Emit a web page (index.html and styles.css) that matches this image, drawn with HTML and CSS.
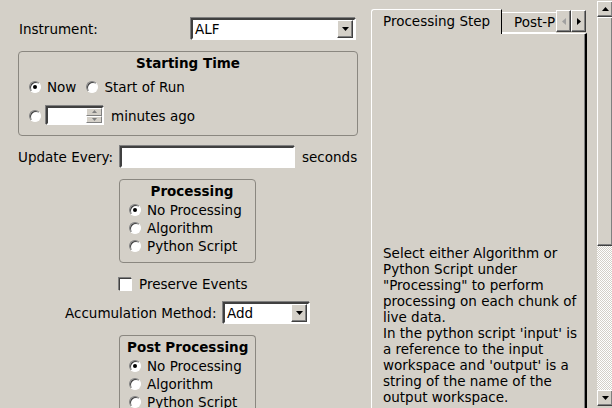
FILE: index.html
```html
<!DOCTYPE html>
<html>
<head>
<meta charset="utf-8">
<link rel="stylesheet" href="styles.css">
</head>
<body>
<div class="app">
  <div class="left">
    <div class="row instrument-row">
      <span class="lbl lbl-inst">Instrument:</span>
      <div class="combo combo-inst"><span class="combo-text">ALF</span><span class="combo-btn"><svg width="7" height="4" viewBox="0 0 7 4"><path d="M0 0H7L3.5 4Z" fill="#000"/></svg></span></div>
    </div>

    <div class="group group-start">
      <div class="group-title">Starting Time</div>
      <div class="row radios-row">
        <span class="radio checked"></span><span class="rtext">Now</span>
        <span class="radio r2"></span><span class="rtext">Start of Run</span>
      </div>
      <div class="row minutes-row">
        <span class="radio"></span>
        <div class="spin"><span class="spin-field"></span><span class="spin-btns"><span class="sbtn"><svg width="5" height="3" viewBox="0 0 5 3"><path d="M2.5 0L5 3H0Z" fill="#808080"/></svg></span><span class="sbtn"><svg width="5" height="3" viewBox="0 0 5 3"><path d="M0 0H5L2.5 3Z" fill="#808080"/></svg></span></span></div>
        <span class="rtext">minutes ago</span>
      </div>
    </div>

    <div class="row update-row">
      <span class="lbl lbl-update">Update Every:</span>
      <span class="field field-update"></span>
      <span class="lbl">seconds</span>
    </div>

    <div class="group group-small group-proc">
      <div class="group-title">Processing</div>
      <div class="opt"><span class="radio checked"></span><span class="rtext">No Processing</span></div>
      <div class="opt"><span class="radio"></span><span class="rtext">Algorithm</span></div>
      <div class="opt"><span class="radio"></span><span class="rtext">Python Script</span></div>
    </div>

    <div class="row check-row">
      <span class="checkbox"></span><span class="rtext">Preserve Events</span>
    </div>

    <div class="row accum-row">
      <span class="lbl lbl-accum">Accumulation Method:</span>
      <div class="combo combo-accum"><span class="combo-text">Add</span><span class="combo-btn"><svg width="7" height="4" viewBox="0 0 7 4"><path d="M0 0H7L3.5 4Z" fill="#000"/></svg></span></div>
    </div>

    <div class="group group-small group-post">
      <div class="group-title title-left">Post Processing</div>
      <div class="opt"><span class="radio checked"></span><span class="rtext">No Processing</span></div>
      <div class="opt"><span class="radio"></span><span class="rtext">Algorithm</span></div>
      <div class="opt"><span class="radio"></span><span class="rtext">Python Script</span></div>
    </div>
  </div>

  <div class="tabs">
    <div class="tabbar">
      <div class="tab active">Processing Step</div>
      <div class="tab inactive"><span>Post-P</span></div>
      <div class="tscroll">
        <span class="tsbtn"><svg width="4" height="7" viewBox="0 0 4 7"><path d="M4 0V7L0 3.5Z" fill="#a0a0a0"/></svg></span>
        <span class="tsbtn"><svg width="4" height="7" viewBox="0 0 4 7"><path d="M0 0V7L4 3.5Z" fill="#000"/></svg></span>
      </div>
    </div>
    <div class="pane">
      <p class="help">Select either Algorithm or Python Script under "Processing" to perform processing on each chunk of live data.<br>In the python script 'input' is a reference to the input workspace and 'output' is a string of the name of the output workspace.</p>
    </div>
  </div>

  <div class="vscroll">
    <span class="vbtn"><svg width="7" height="4" viewBox="0 0 7 4"><path d="M3.5 0L7 4H0Z" fill="#000"/></svg></span>
    <span class="vhandle"></span>
    <span class="vtrough"></span>
    <span class="vbtn"><svg width="7" height="4" viewBox="0 0 7 4"><path d="M0 0H7L3.5 4Z" fill="#000"/></svg></span>
  </div>
</div>
</body>
</html>
```

FILE: styles.css
```css
* { box-sizing: border-box; }
html, body { margin: 0; padding: 0; }
body {
  width: 612px;
  height: 408px;
  overflow: hidden;
  background: #d4d0c8;
  font-family: "DejaVu Sans", sans-serif;
  font-size: 13.5px;
  color: #000;
}
.app {
  display: flex;
  height: 408px;
  overflow: hidden;
}
.left {
  width: 370px;
  height: 408px;
  overflow: hidden;
  flex: none;
  display: flex;
  flex-direction: column;
  padding-top: 18px;
}
.left > * { flex: none; }
.row {
  display: flex;
  align-items: center;
}
.lbl, .rtext { white-space: nowrap; line-height: 16px; }

.instrument-row {
  height: 22px;
  padding-left: 19px;
}
.lbl-inst { width: 172px; }
.combo {
  display: flex;
  background: #fff;
  border: 2px solid;
  border-color: #404040 #fff #fff #404040;
  box-shadow: -1px -1px 0 #808080;
  height: 22px;
  padding: 0 1px 0 0;
  align-items: center;
}
.combo-inst { width: 165px; }
.combo-text { flex: 1; padding-left: 2px; line-height: 16px; }
.combo-btn {
  width: 16px;
  height: 18px;
  background: #d4d0c8;
  border: 1px solid;
  border-color: #fff #404040 #404040 #fff;
  box-shadow: inset -1px -1px 0 #808080;
  display: flex;
  align-items: center;
  justify-content: center;
}

.group {
  border: 1px solid #8a8780;
  border-radius: 4px;
}
.group-title {
  font-weight: bold;
  text-align: center;
  line-height: 16px;
}
.group-start {
  margin: 11px 0 0 18px;
  width: 340px;
  height: 85px;
  padding: 3px 0 0 10px;
}
.group-start .group-title { margin-right: 10px; }
.radios-row { margin-top: 8px; height: 16px; }
.radio {
  width: 12px;
  height: 12px;
  flex: none;
  border-radius: 50%;
  border: 1px solid;
  border-color: #808080 #fff #fff #808080;
  box-shadow: inset 1px 1px 0 #404040;
  background: #fff;
  position: relative;
  margin-right: 6px;
}
.radio.checked::after {
  content: "";
  position: absolute;
  left: 3px;
  top: 3px;
  width: 4px;
  height: 4px;
  border-radius: 50%;
  background: #000;
}
.radio.r2 { margin-left: 10px; }
.minutes-row { margin-top: 11px; height: 19px; }
.minutes-row .radio { margin-right: 5px; }
.spin {
  width: 58px;
  height: 19px;
  display: flex;
  background: #fff;
  border: 2px solid;
  border-color: #404040 #fff #fff #404040;
  box-shadow: -1px -1px 0 #808080;
  margin-right: 7px;
}
.spin-field { flex: 1; }
.spin-btns {
  width: 16px;
  display: flex;
  flex-direction: column;
}
.sbtn {
  flex: 1;
  background: #d4d0c8;
  border: 1px solid;
  border-color: #fff #808080 #808080 #fff;
  display: flex;
  align-items: center;
  justify-content: center;
}

.update-row {
  margin-top: 10px;
  padding-left: 18px;
  height: 22px;
}
.lbl-update { width: 102px; }
.field {
  background: #fff;
  border: 2px solid;
  border-color: #404040 #fff #fff #404040;
  box-shadow: -1px -1px 0 #808080;
  height: 22px;
}
.field-update { width: 175px; margin: 0 7px 0 0; }

.group-small {
  width: 137px;
  margin-left: 119px;
  padding: 3px 0 0 9px;
}
.group-proc { margin-top: 11px; height: 84px; }
.opt {
  display: flex;
  align-items: center;
  height: 18px;
}
.group-small .group-title + .opt { margin-top: 2px; }
.title-left { text-align: left; padding-left: 0; margin-left: -2px; }
.group-post { margin-top: 11px; height: 100px; border-bottom: none; }

.check-row {
  margin-top: 15px;
  padding-left: 119px;
  height: 12px;
}
.checkbox {
  width: 13px;
  height: 13px;
  background: #fff;
  border: 1px solid;
  border-color: #404040 #fff #fff #404040;
  box-shadow: -1px -1px 0 #808080;
  margin-right: 7px;
}
.accum-row {
  margin-top: 12px;
  padding-left: 65px;
  height: 22px;
}
.lbl-accum { width: 158px; }
.combo-accum { width: 87px; }

.tabs {
  width: 217px;
  flex: none;
  display: flex;
  flex-direction: column;
  padding-top: 9px;
  margin-left: 1px;
}
.tabbar {
  display: flex;
  height: 24px;
  align-items: flex-end;
  position: relative;
  z-index: 1;
}
.tab {
  white-space: nowrap;
  line-height: 16px;
}
.tab.active {
  width: 131px;
  border-top: 1px solid #fff;
  border-left: 1px solid #fff;
  border-right: 1px solid #000;
  border-top-left-radius: 3px;
  padding: 3px 0 0 11px;
  background: #d4d0c8;
  margin-bottom: -1px;
  height: 25px;
}
.tab.inactive {
  width: 54px;
  height: 21px;
  border-top: 1px solid #fff;
  overflow: hidden;
  padding: 1px 0 0 12px;
  border-bottom: 1px solid #fff;
}
.tscroll {
  display: flex;
  align-self: flex-start;
  margin-top: 1px;
  height: 23px;
}
.tsbtn {
  width: 15px;
  height: 22px;
  background: #d4d0c8;
  border: 1px solid;
  border-color: #fff #404040 #404040 #fff;
  box-shadow: inset -1px -1px 0 #808080;
  display: flex;
  align-items: center;
  justify-content: center;
}
.pane {
  flex: 1;
  border-left: 1px solid #fff;
  border-top: 1px solid #fff;
  border-right: 2px solid #000;
  box-shadow: inset -1px 0 0 #808080;
  width: 216px;
  padding: 211px 6px 0 11px;
}
.help {
  margin: 0;
  line-height: 16px;
}

.vscroll {
  width: 16px;
  margin-left: 9px;
  flex: none;
  display: flex;
  flex-direction: column;
  padding: 1px 0 2px 0;
}
.vbtn {
  height: 16px;
  flex: none;
  background: #d4d0c8;
  border: 1px solid;
  border-color: #fff #404040 #404040 #fff;
  box-shadow: inset -1px -1px 0 #808080;
  display: flex;
  align-items: center;
  justify-content: center;
}
.vhandle {
  height: 229px;
  flex: none;
  background: #d4d0c8;
  border: 1px solid;
  border-color: #fff #404040 #404040 #fff;
  box-shadow: inset -1px -1px 0 #808080;
}
.vtrough {
  flex: 1;
  background-color: #fff;
  background-image: repeating-conic-gradient(#d4d0c8 0 25%, #fff 0 50%);
  background-size: 2px 2px;
}
```
